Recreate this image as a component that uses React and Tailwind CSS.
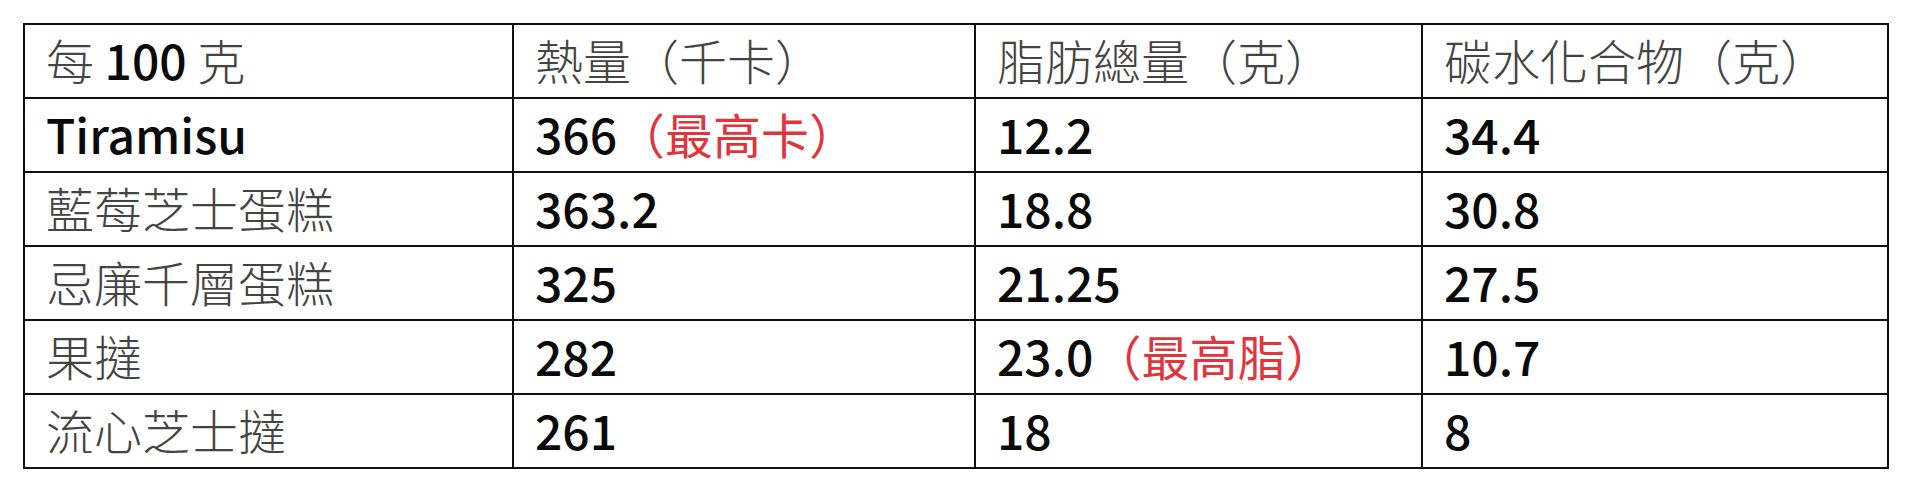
import React from 'react';

const rows = [
  ['Tiramisu', ['366', '（最高卡）'], ['12.2'], ['34.4']],
  ['藍莓芝士蛋糕', ['363.2'], ['18.8'], ['30.8']],
  ['忌廉千層蛋糕', ['325'], ['21.25'], ['27.5']],
  ['果撻', ['282'], ['23.0', '（最高脂）'], ['10.7']],
  ['流心芝士撻', ['261'], ['18'], ['8']],
];

const widths = ['w-[489px]', 'w-[462px]', 'w-[447px]', 'w-[466px]'];

// Latin glyphs in black, CJK glyphs drawn a bit lighter like the original
const Mixed = ({ text }) => {
  const parts = text.split(/([A-Za-z0-9.]+)/).filter(Boolean);
  return parts.map((p, i) =>
    /[A-Za-z0-9.]/.test(p) ? (
      <span key={i} className="text-[#0a0a0a] font-medium">{p}</span>
    ) : (
      <span key={i} className="text-[#444] font-light">{p}</span>
    )
  );
};

const Cell = ({ w, children }) => (
  <div className={`${w} h-[74px] shrink-0 border-r-2 border-b-2 border-[#111] flex items-center pl-[21px] pb-[4px]`}>
    <span className="leading-none whitespace-nowrap">{children}</span>
  </div>
);

const App = () => {
  const header = ['每 100 克', '熱量（千卡）', '脂肪總量（克）', '碳水化合物（克）'];

  return (
    <div
      className="w-[1920px] h-[493px] bg-white pt-[23px] pl-[23px] text-[48px]"
      style={{ fontFamily: '"Noto Sans CJK TC", "Noto Sans CJK SC", sans-serif' }}
    >
      <div className="inline-flex flex-col border-t-2 border-l-2 border-[#111]">
        <div className="flex">
          {header.map((h, i) => (
            <Cell key={i} w={widths[i]}>
              <Mixed text={h} />
            </Cell>
          ))}
        </div>
        {rows.map((r, ri) => (
          <div key={ri} className="flex">
            <Cell w={widths[0]}>
              <Mixed text={r[0]} />
            </Cell>
            {r.slice(1).map((c, ci) => (
              <Cell key={ci} w={widths[ci + 1]}>
                <span className="text-[#0a0a0a] font-medium">{c[0]}</span>
                {c[1] && <span className="text-[#e2343c] font-normal">{c[1]}</span>}
              </Cell>
            ))}
          </div>
        ))}
      </div>
    </div>
  );
};

export default App;
